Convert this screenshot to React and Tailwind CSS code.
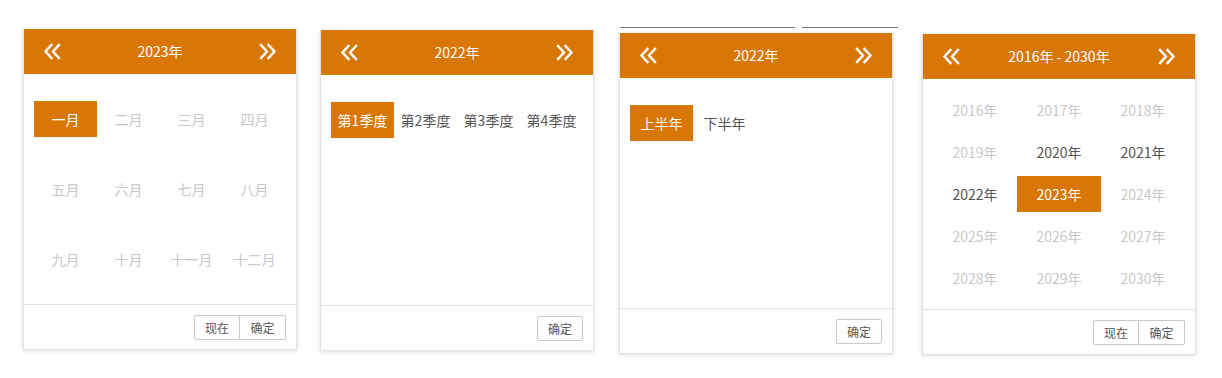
import React from 'react';

const font = { fontFamily: '"Noto Sans CJK SC", "Liberation Sans", sans-serif' };

const DoubleLeft = () => (
  <svg width="19" height="17" viewBox="0 0 19 17" fill="none" stroke="white" strokeWidth="2.4" strokeLinecap="square">
    <polyline points="8.5,2 2.5,8.5 8.5,15" />
    <polyline points="16,2 10,8.5 16,15" />
  </svg>
);

const DoubleRight = () => (
  <svg width="19" height="17" viewBox="0 0 19 17" fill="none" stroke="white" strokeWidth="2.4" strokeLinecap="square">
    <polyline points="3,2 9,8.5 3,15" />
    <polyline points="10.5,2 16.5,8.5 10.5,15" />
  </svg>
);

const Header = ({ title }) => (
  <div className="h-[45px] bg-[#d97706] flex items-center justify-between px-[19px] text-white text-[14px]">
    <DoubleLeft />
    <span>{title}</span>
    <DoubleRight />
  </div>
);

const Footer = ({ now }) => (
  <div className="h-[45px] border-t border-[#e2e2e2] flex justify-end items-start pt-[10px] pr-[10px]">
    {now && (
      <button className="w-[46px] h-[25px] border border-[#c9c9c9] rounded-l-[2px] text-[12px] text-[#555] bg-white">现在</button>
    )}
    <button className={`w-[46px] h-[25px] border border-[#c9c9c9] text-[12px] text-[#555] bg-white ${now ? 'border-l-0 rounded-r-[2px]' : 'rounded-[2px]'}`}>确定</button>
  </div>
);

const Cell = ({ label, active, muted, w }) => (
  <div className={`h-[36px] flex items-center justify-center text-[14px] whitespace-nowrap ${w} ${active ? 'bg-[#d97706] text-white' : muted ? 'text-[#c8c8c8]' : 'text-[#555]'}`}>
    {label}
  </div>
);

const Panel = ({ title, now, children }) => (
  <div className="w-[274px] h-[321px] bg-white border border-[#e2e2e2] border-t-0 shadow-[0_1px_5px_rgba(0,0,0,0.13)] flex flex-col">
    <Header title={title} />
    <div className="flex-1 px-[10px] py-[10px]">{children}</div>
    <Footer now={now} />
  </div>
);

const months = ['一月', '二月', '三月', '四月', '五月', '六月', '七月', '八月', '九月', '十月', '十一月', '十二月'];
const years = Array.from({ length: 15 }, (_, i) => 2016 + i);

export default function App() {
  return (
    <div className="w-[1222px] h-[378px] bg-white flex items-start pl-[23px]" style={font}>
      <div className="mt-[29px]">
        <Panel title="2023年" now>
          <div className="grid grid-cols-4">
            {months.map((m, i) => (
              <div key={m} className="h-[70px] flex items-center">
                <Cell label={m} active={i === 0} muted={i !== 0} w="w-[63px]" />
              </div>
            ))}
          </div>
        </Panel>
      </div>

      <div className="mt-[30px] ml-[23px]">
        <Panel title="2022年">
          <div className="flex h-[70px] items-center">
            {['第1季度', '第2季度', '第3季度', '第4季度'].map((q, i) => (
              <Cell key={q} label={q} active={i === 0} w="w-[63px]" />
            ))}
          </div>
        </Panel>
      </div>

      <div className="ml-[25px] mt-[27px] flex flex-col">
        <div className="flex h-px">
          <div className="ml-px w-[175px] h-px bg-[#7a7a7a]" />
          <div className="ml-[7px] w-[96px] h-px bg-[#7a7a7a]" />
        </div>
        <div className="mt-[5px]">
          <Panel title="2022年">
            <div className="flex h-[70px] items-center">
              <Cell label="上半年" active w="w-[63px]" />
              <Cell label="下半年" w="w-[63px]" />
            </div>
          </Panel>
        </div>
      </div>

      <div className="mt-[34px] ml-[24px]">
        <Panel title="2016年 - 2030年" now>
          <div className="grid grid-cols-3">
            {years.map((y) => (
              <div key={y} className="h-[42px] flex items-center">
                <Cell
                  label={`${y}年`}
                  active={y === 2023}
                  muted={y < 2020 || y > 2023}
                  w="w-[84px]"
                />
              </div>
            ))}
          </div>
        </Panel>
      </div>
    </div>
  );
}
